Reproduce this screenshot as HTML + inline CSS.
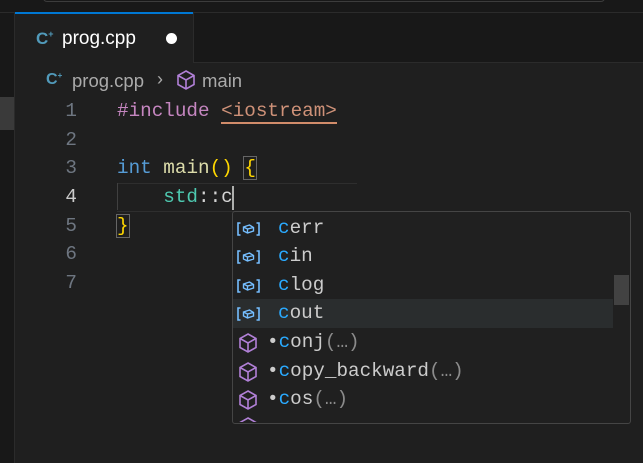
<!DOCTYPE html>
<html><head><style>
body{margin:0;width:643px;height:463px;background:#1f1f1f;overflow:hidden;position:relative;font-family:"Liberation Sans",sans-serif}
.a{position:absolute}
.m{font-family:"Liberation Mono",monospace;font-size:19.3px;white-space:pre}
.ln{color:#6e7681;width:30px;text-align:right;left:47px}
.it{left:233px;width:380px;height:28.5px}
.it .t{position:absolute;left:45px;top:3px;color:#ccc}
.c{color:#2aaaff}
.g{color:#8b8b8b}
</style></head><body>
<svg width="0" height="0" style="position:absolute"><defs>
<symbol id="cube" viewBox="0 0 20 22"><path d="M10 2 L18 6.5 V15.5 L10 20 L2 15.5 V6.5 Z M2 6.5 L10 11 L18 6.5 M10 11 V20" fill="none" stroke="#b180d7" stroke-width="1.6"/></symbol>
<symbol id="var" viewBox="0 0 24 16"><path d="M4 2 H1.5 V14 H4 M20 2 H22.5 V14 H20" fill="none" stroke="#75beff" stroke-width="1.6"/><path d="M7 6 L13 4 L17 6.5 V10 L11 12 L7 10 Z M7 6 L11 8 L17 6.5 M11 8 V12" fill="none" stroke="#75beff" stroke-width="1.4"/></symbol>
</defs></svg>
<div class="a" style="left:0;top:0;width:643px;height:12px;background:#181818;border-bottom:1px solid #2b2b2b"></div>
<div class="a" style="left:43px;top:-6px;width:560px;height:6px;border:1px solid #3c3c3c;border-radius:4px"></div>
<div class="a" style="left:0;top:13px;width:14px;height:450px;background:#181818;border-right:1px solid #2b2b2b"></div>
<div class="a" style="left:0;top:97px;width:14px;height:33px;background:#3a3a3a"></div>
<div class="a" style="left:193px;top:13px;width:450px;height:49px;background:#181818;border-bottom:1px solid #2b2b2b;border-left:1px solid #2b2b2b"></div>
<div class="a" style="left:15px;top:12px;width:178px;height:2px;background:#0078d4"></div>
<div class="a" style="left:36px;top:29px;color:#519aba;font-weight:bold;font-size:17px">C<span style="font-size:9px;vertical-align:top">+</span></div>
<div class="a" style="left:62px;top:28px;color:#fff;font-size:19px">prog.cpp</div>
<div class="a" style="left:166px;top:33px;width:11px;height:11px;border-radius:50%;background:#fff"></div>
<div class="a" style="left:46px;top:71px;color:#519aba;font-weight:bold;font-size:16px">C<span style="font-size:8px;vertical-align:top">+</span></div>
<div class="a" style="left:72px;top:70px;color:#aaa;font-size:18.5px">prog.cpp</div>
<div class="a" style="left:157px;top:69px;color:#aaa;font-size:18px">›</div>
<svg class="a" style="left:176px;top:69px" width="20" height="22"><use href="#cube"/></svg>
<div class="a" style="left:202px;top:70px;color:#aaa;font-size:18.5px">main</div>
<div class="a m ln" style="top:100px">1</div>
<div class="a m ln" style="top:129px">2</div>
<div class="a m ln" style="top:157px">3</div>
<div class="a m ln" style="top:186px;color:#ccc">4</div>
<div class="a m ln" style="top:215px">5</div>
<div class="a m ln" style="top:243px">6</div>
<div class="a m ln" style="top:272px">7</div>
<div class="a" style="left:117px;top:183px;width:240px;height:27px;border-top:1px solid #2e2e2e;border-bottom:1px solid #2e2e2e"></div>
<div class="a" style="left:117px;top:183px;width:1px;height:27px;background:#404040"></div>
<div class="a m" style="left:117px;top:100px;color:#c586c0">#include <span style="color:#ce9178;border-bottom:2px solid #d18c6a">&lt;iostream&gt;</span></div>
<div class="a m" style="left:117px;top:157px"><span style="color:#569cd6">int</span> <span style="color:#dcdcaa">main</span><span style="color:#ffd700">()</span> <span style="color:#ffd700;outline:1px solid #666">{</span></div>
<div class="a m" style="left:117px;top:186px;color:#4ec9b0">    std<span style="color:#d4d4d4">::c</span></div>
<div class="a" style="left:232px;top:186px;width:2px;height:24px;background:#aeafad"></div>
<div class="a m" style="left:117px;top:215px;color:#ffd700"><span style="outline:1px solid #666">}</span></div>
<div class="a" style="left:232px;top:211px;width:397px;height:211px;background:#202020;border:1px solid #454545;border-radius:3px;overflow:hidden">
<div class="a" style="left:0;top:87px;width:380px;height:29px;background:#2a2d2e"></div>
<div class="a" style="left:381px;top:63px;width:15px;height:30px;background:#424242"></div>
</div>
<div class="a m it" style="top:214px"><svg style="position:absolute;left:3px;top:7px" width="25" height="16"><use href="#var"/></svg><span class="t"><span class="c">c</span>err</span></div>
<div class="a m it" style="top:242px"><svg style="position:absolute;left:3px;top:7px" width="25" height="16"><use href="#var"/></svg><span class="t"><span class="c">c</span>in</span></div>
<div class="a m it" style="top:271px"><svg style="position:absolute;left:3px;top:7px" width="25" height="16"><use href="#var"/></svg><span class="t"><span class="c">c</span>log</span></div>
<div class="a m it" style="top:299px"><svg style="position:absolute;left:3px;top:7px" width="25" height="16"><use href="#var"/></svg><span class="t"><span class="c">c</span>out</span></div>
<div class="a m it" style="top:328px"><svg style="position:absolute;left:5px;top:4px" width="20" height="22"><use href="#cube"/></svg><span class="t" style="left:34px">•<span class="c">c</span>onj<span class="g">(…)</span></span></div>
<div class="a m it" style="top:357px"><svg style="position:absolute;left:5px;top:4px" width="20" height="22"><use href="#cube"/></svg><span class="t" style="left:34px">•<span class="c">c</span>opy_backward<span class="g">(…)</span></span></div>
<div class="a m it" style="top:385px"><svg style="position:absolute;left:5px;top:4px" width="20" height="22"><use href="#cube"/></svg><span class="t" style="left:34px">•<span class="c">c</span>os<span class="g">(…)</span></span></div>
<div class="a" style="left:233px;top:414px;width:396px;height:8px;overflow:hidden"><svg style="position:absolute;left:5px;top:2px" width="20" height="22"><use href="#cube"/></svg></div>
</body></html>
